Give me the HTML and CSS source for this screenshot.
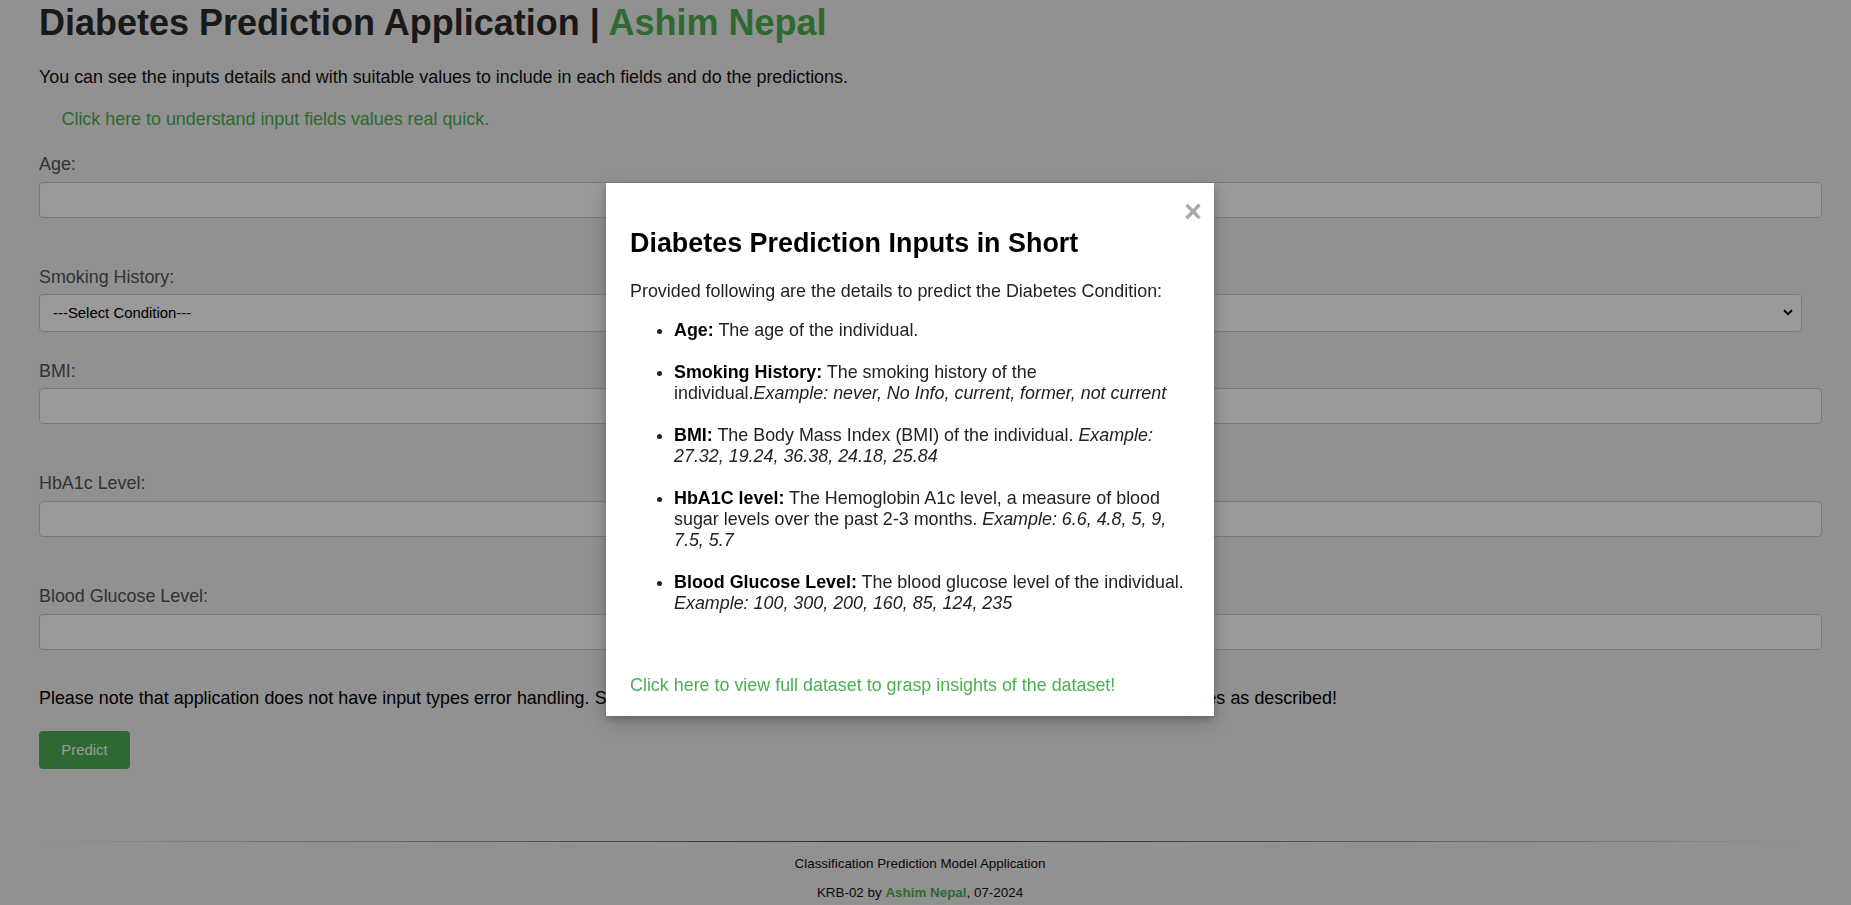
FILE: index.html
```html
<!DOCTYPE html>
<html lang="en">
<head>
<meta charset="utf-8">
<title>Diabetes Prediction Application | Ashim Nepal</title>
<link rel="stylesheet" href="styles.css">
</head>
<body>
<div class="page">
  <main class="content">
    <h1 class="title">Diabetes Prediction Application | <span class="accent">Ashim Nepal</span></h1>
    <p class="intro">You can see the inputs details and with suitable values to include in each fields and do the predictions.</p>
    <div class="help"><a class="help-link" href="#">Click here to understand input fields values real quick.</a></div>

    <form class="form">
      <div class="field field-spaced">
        <label class="field-label" for="age">Age:</label>
        <input class="field-input" id="age" type="text">
      </div>
      <div class="field">
        <label class="field-label" for="smoking">Smoking History:</label>
        <div class="select-wrap">
          <select class="field-select" id="smoking">
            <option>---Select Condition---</option>
          </select>
          <svg class="select-arrow" width="10" height="7" viewBox="0 0 10 7"><path d="M1 1.2 L5 5.2 L9 1.2" fill="none" stroke="#000" stroke-width="2"/></svg>
        </div>
      </div>
      <div class="field field-spaced">
        <label class="field-label" for="bmi">BMI:</label>
        <input class="field-input" id="bmi" type="text">
      </div>
      <div class="field field-spaced">
        <label class="field-label" for="hba1c">HbA1c Level:</label>
        <input class="field-input" id="hba1c" type="text">
      </div>
      <div class="field field-last">
        <label class="field-label" for="glucose">Blood Glucose Level:</label>
        <input class="field-input" id="glucose" type="text">
      </div>
    </form>

    <p class="note">Please note that application does not have input types error handling. So, please make sure to provide all the correct and valid input types and values as described!</p>
    <button class="predict" type="button">Predict</button>
  </main>

  <footer class="footer">
    <hr class="footer-rule">
    <p class="footer-line">Classification Prediction Model Application</p>
    <p class="footer-line">KRB-02 by <span class="footer-name">Ashim Nepal</span>, 07-2024</p>
  </footer>
</div>

<div class="overlay">
  <div class="modal">
    <span class="modal-close">&times;</span>
    <h2 class="modal-title">Diabetes Prediction Inputs in Short</h2>
    <p class="modal-text">Provided following are the details to predict the Diabetes Condition:</p>
    <ul class="modal-list">
      <li><strong>Age:</strong> The age of the individual.</li>
      <li><strong>Smoking History:</strong> The smoking history of the individual.<em>Example: never, No Info, current, former, not current</em></li>
      <li><strong>BMI:</strong> The Body Mass Index (BMI) of the individual. <em>Example: 27.32, 19.24, 36.38, 24.18, 25.84</em></li>
      <li><strong>HbA1C level:</strong> The Hemoglobin A1c level, a measure of blood sugar levels over the past 2-3 months. <em>Example: 6.6, 4.8, 5, 9, 7.5, 5.7</em></li>
      <li><strong>Blood Glucose Level:</strong> The blood glucose level of the individual. <em>Example: 100, 300, 200, 160, 85, 124, 235</em></li>
    </ul>
    <div class="modal-footer"><a class="modal-link" href="#">Click here to view full dataset to grasp insights of the dataset!</a></div>
  </div>
</div>
</body>
</html>
```

FILE: styles.css
```css
* {
  box-sizing: border-box;
}

html, body {
  margin: 0;
  padding: 0;
}

body {
  background: #f2f2f2;
  font-family: "Liberation Sans", Arial, sans-serif;
  font-size: 17.9px;
  color: #111;
  overflow: hidden;
}

.page {
  width: 1840px;
}

.content {
  padding: 2px 38px 0 39px;
}

.title {
  margin: 0 0 24px;
  font-size: 36px;
  font-weight: bold;
  color: #2b2b2b;
  line-height: 41px;
}

.accent {
  color: #4caf50;
}

.intro {
  margin: 0 0 20.5px;
  color: #111;
}

.help {
  padding-left: 22.5px;
  margin-bottom: 24.5px;
}

.help-link {
  color: #4caf50;
  text-decoration: none;
}

.form {
  display: flex;
  flex-direction: column;
}

.field {
  display: flex;
  flex-direction: column;
  margin-bottom: 28.6px;
}

.field-spaced {
  margin-bottom: 49.2px;
}

.field-last {
  margin-bottom: 38px;
}

.field-label {
  color: #555;
  margin-bottom: 6.5px;
}

.field-input {
  box-sizing: content-box;
  width: 100%;
  height: 16px;
  padding: 9px;
  border: 1px solid #ccc;
  border-radius: 4px;
  background: #fff;
  font: inherit;
}

.select-wrap {
  position: relative;
}

.field-select {
  appearance: none;
  -webkit-appearance: none;
  width: 100%;
  height: 38px;
  padding: 0 30px 0 13px;
  border: 1px solid #ccc;
  border-radius: 4px;
  background: #fff;
  font-family: "Liberation Sans", Arial, sans-serif;
  font-size: 14.9px;
  color: #000;
}

.select-arrow {
  position: absolute;
  right: 9px;
  top: 15px;
}

.note {
  margin: 0 0 22px;
  color: #000;
  word-spacing: 0.15px;
}

.predict {
  display: block;
  width: 91px;
  height: 38px;
  padding: 0;
  border: none;
  border-radius: 4px;
  background: #4caf50;
  color: #fff;
  font-family: "Liberation Sans", Arial, sans-serif;
  font-size: 14.9px;
}

.footer {
  margin-top: 72px;
  text-align: center;
}

.footer-rule {
  margin: 0 38px 0 39px;
  height: 1px;
  border: 0;
  background-image: linear-gradient(to right, rgba(0, 0, 0, 0), rgba(0, 0, 0, 0.75), rgba(0, 0, 0, 0));
}

.footer-line {
  margin: 14.2px 0 0;
  font-size: 13.4px;
  color: #111;
}

.footer-name {
  color: #4caf50;
  font-weight: bold;
}

.overlay {
  position: fixed;
  inset: 0;
  background: rgba(0, 0, 0, 0.4);
}

.modal {
  position: absolute;
  left: 606px;
  top: 183px;
  width: 608px;
  padding: 22px 24px 20.7px;
  background: #fff;
  box-shadow: 0 4px 8px 0 rgba(0, 0, 0, 0.2), 0 6px 20px 0 rgba(0, 0, 0, 0.19);
  color: #222;
}

.modal-close {
  position: absolute;
  top: 14px;
  right: 12px;
  font-size: 30.8px;
  line-height: 1;
  font-weight: bold;
  color: #aaa;
}

.modal-title {
  margin: 23.4px 0 21.3px;
  font-size: 26.9px;
  color: #000;
}

.modal-text {
  margin: 0 0 17.9px;
}

.modal-list {
  margin: 0;
  padding-left: 44px;
}

.modal-list li {
  margin-bottom: 21.2px;
}

.modal-list li:last-child {
  margin-bottom: 0;
}

.modal-list strong {
  color: #000;
}

.modal-footer {
  margin-top: 60.2px;
}

.modal-link {
  color: #4caf50;
  text-decoration: none;
}
```
